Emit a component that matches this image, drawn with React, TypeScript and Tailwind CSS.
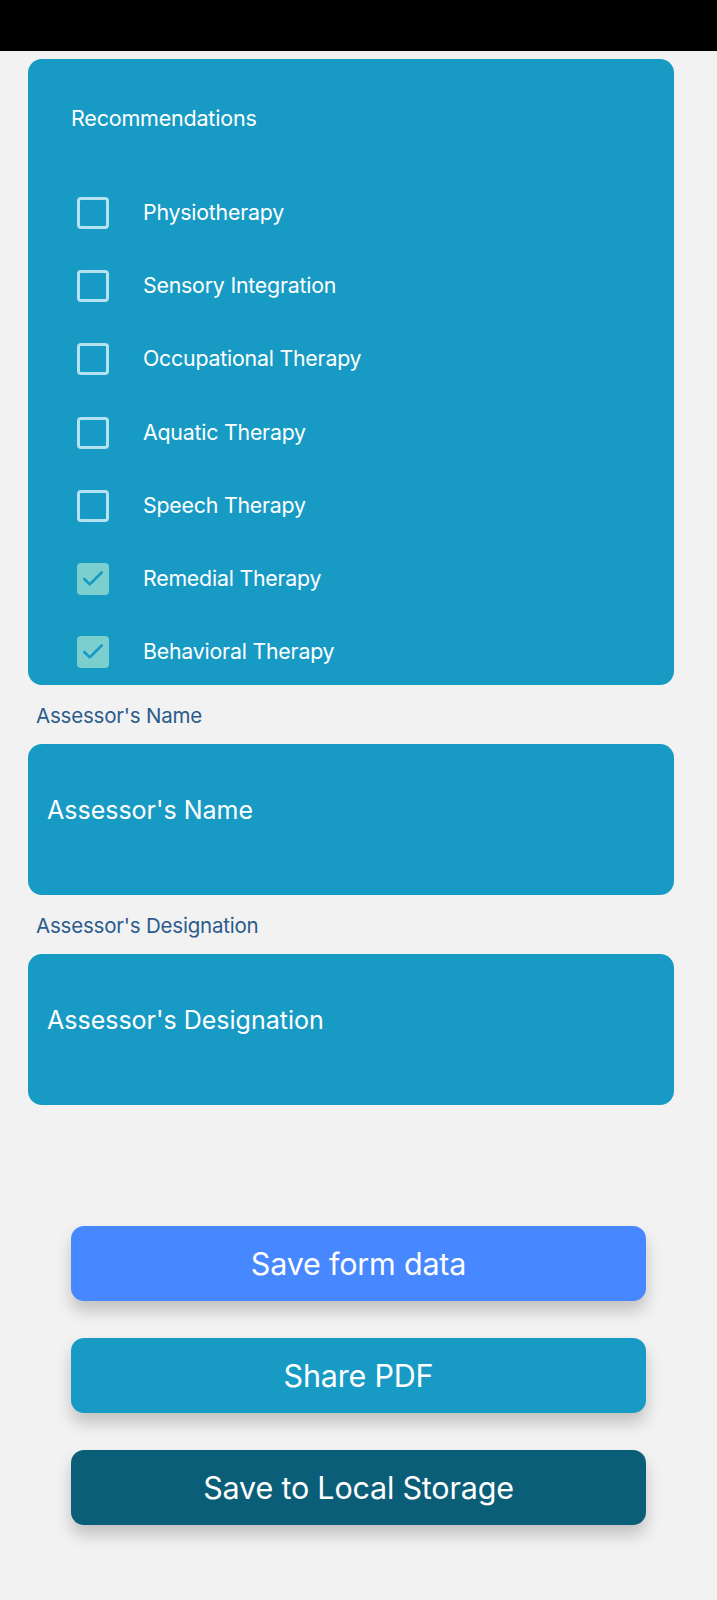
import { Check } from "lucide-react";

const options = [
  { name: "Physiotherapy", checked: false },
  { name: "Sensory Integration", checked: false },
  { name: "Occupational Therapy", checked: false },
  { name: "Aquatic Therapy", checked: false },
  { name: "Speech Therapy", checked: false },
  { name: "Remedial Therapy", checked: true },
  { name: "Behavioral Therapy", checked: true },
];

const CheckBox = ({ checked }: { checked: boolean }) =>
  checked ? (
    <div className="w-[32px] h-[32px] rounded-[4px] bg-[#7ccfcf] flex items-center justify-center">
      <Check size={26} strokeWidth={2.5} className="text-[#179bc5]" />
    </div>
  ) : (
    <div className="w-[32px] h-[32px] rounded-[4px] border-[3px] border-[#b5e2f1]" />
  );

const Field = ({ label }: { label: string }) => (
  <div>
    <div className="mt-[19px] ml-[36px] h-[24px] leading-[24px] text-[20.5px] tracking-[-0.2px] text-[#2b5b8c]">{label}</div>
    <div className="mt-[16px] ml-[28px] mr-[43px] h-[151px] rounded-[14px] bg-[#179bc5] pt-[51px] pl-[19px]">
      <span className="text-[25px] leading-[30px] text-white">{label}</span>
    </div>
  </div>
);

export default function App() {
  return (
    <div className="min-h-[1600px] bg-[#f2f2f2] font-['Inter',sans-serif]">
      <div className="h-[51px] bg-black" />

      {/* Recommendations card */}
      <div className="mt-[8px] ml-[28px] mr-[43px] h-[626px] rounded-[14px] bg-[#179bc5] overflow-hidden pt-[47px]">
        <div className="ml-[43px] h-[24px] leading-[24px] text-[21.5px] tracking-[-0.2px] text-white">Recommendations</div>
        <div className="mt-[46px]">
          {options.map((opt) => (
            <div key={opt.name} className="h-[73.3px] flex items-center">
              <div className="ml-[49px]">
                <CheckBox checked={opt.checked} />
              </div>
              <span className="ml-[34px] text-[21.3px] tracking-[-0.2px] text-white">{opt.name}</span>
            </div>
          ))}
        </div>
      </div>

      <Field label="Assessor's Name" />
      <Field label="Assessor's Designation" />

      <div className="mt-[121px] mx-[71px] flex flex-col gap-[37px]">
        <button className="h-[75px] rounded-[13px] bg-[#4787ff] text-white text-[30.5px] tracking-[-0.2px] shadow-[0_10px_16px_rgba(0,0,0,0.2)]">
          Save form data
        </button>
        <button className="h-[75px] rounded-[13px] bg-[#179bc5] text-white text-[30.5px] tracking-[-0.2px] shadow-[0_10px_16px_rgba(0,0,0,0.2)]">
          Share PDF
        </button>
        <button className="h-[75px] rounded-[13px] bg-[#0b5e78] text-white text-[30.5px] tracking-[-0.2px] shadow-[0_10px_16px_rgba(0,0,0,0.2)]">
          Save to Local Storage
        </button>
      </div>
    </div>
  );
}
